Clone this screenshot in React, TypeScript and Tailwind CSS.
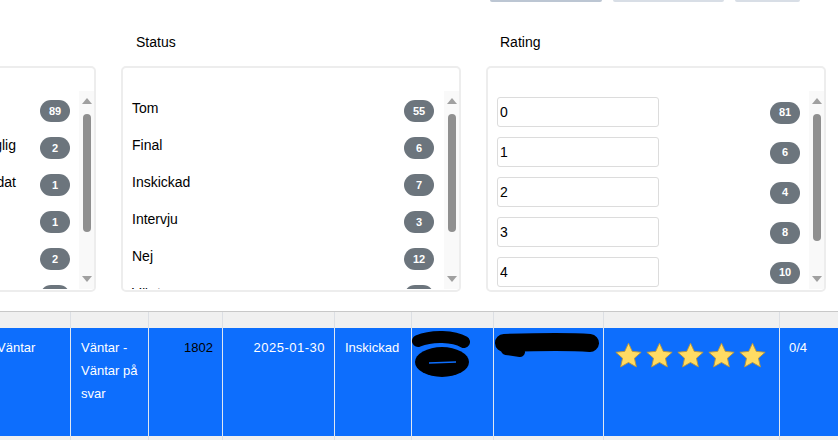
import React from 'react';

const statusRows = [
  { label: 'Tom', count: 55 },
  { label: 'Final', count: 6 },
  { label: 'Inskickad', count: 7 },
  { label: 'Intervju', count: 3 },
  { label: 'Nej', count: 12 },
  { label: 'Väntar', count: 2 },
];

const leftRows = [
  { label: '', count: 89 },
  { label: 'Ej tillgänglig', count: 2 },
  { label: 'Kandidat', count: 1 },
  { label: '', count: 1 },
  { label: '', count: 2 },
  { label: '', count: 4 },
];

const ratingRows = [
  { value: '0', count: 81 },
  { value: '1', count: 6 },
  { value: '2', count: 4 },
  { value: '3', count: 8 },
  { value: '4', count: 10 },
];

const cols = 'grid grid-cols-[83px_78px_74px_112px_77px_82px_110px_176px_80px]';

function Badge({ n }: { n: number }) {
  return (
    <span className="mt-[3px] flex h-[22px] w-[30px] shrink-0 items-center justify-center rounded-full bg-[#6c757d] text-[11px] font-bold text-white">
      {n}
    </span>
  );
}

function Scrollbar({ thumb }: { thumb: string }) {
  return (
    <div className="flex w-[15px] shrink-0 flex-col items-center bg-[#f9f9f9]">
      <div className="flex h-[20px] items-center justify-center">
        <div className="h-0 w-0 border-x-[5px] border-b-[6px] border-x-transparent border-b-[#a0a0a0]" />
      </div>
      <div className={`mt-[3px] w-[8px] rounded-full bg-[#8f8f8f] ${thumb}`} />
      <div className="flex-1" />
      <div className="flex h-[20px] items-center justify-center">
        <div className="h-0 w-0 border-x-[5px] border-t-[6px] border-x-transparent border-t-[#a0a0a0]" />
      </div>
    </div>
  );
}

function Panel({ children }: { children: React.ReactNode }) {
  return (
    <div className="h-[226px] w-[340px] rounded-[5px] border-2 border-[#ededed] pt-[23px]">
      <div className="flex h-[198px] overflow-hidden">{children}</div>
    </div>
  );
}

function Star() {
  return (
    <svg viewBox="0 0 24 24" className="h-[31px] w-[31px]">
      <path
        d="M12 2.5l2.9 6.3 6.9.7-5.2 4.6 1.5 6.8L12 17.4l-6.1 3.5 1.5-6.8L2.2 9.5l6.9-.7z"
        fill="#ffdb63"
        stroke="#b8963c"
        strokeWidth="0.7"
        strokeLinejoin="round"
      />
    </svg>
  );
}

export default function App() {
  return (
    <div className="relative h-[440px] w-[838px] overflow-hidden bg-white font-['Liberation_Sans',Arial,sans-serif] text-[14px] text-black">
      {/* bottoms of the buttons above */}
      <div className="flex h-[2px]">
        <div className="ml-[490px] w-[112px] rounded-b bg-[#bcc6d3]" />
        <div className="ml-[11px] w-[111px] rounded-b bg-[#d8dee6]" />
        <div className="ml-[11px] w-[65px] rounded-b bg-[#d8dee6]" />
      </div>

      <div className="mt-[30px] ml-[-244px] flex gap-[25px]">
        <div className="flex flex-col">
          <div className="mb-[14px] h-[20px]" />
          <Panel>
            <div className="flex-1 pl-[9px] pr-[9px]">
              {leftRows.map((r, i) => (
                <div key={i} className="flex h-[37px] items-center">
                  <span className="mb-[3px] mr-[24px] flex-1 text-right">{r.label}</span>
                  <Badge n={r.count} />
                </div>
              ))}
            </div>
            <Scrollbar thumb="h-[118px]" />
          </Panel>
        </div>

        <div className="flex flex-col">
          <div className="mb-[14px] h-[20px] pl-[15px] leading-[20px]">Status</div>
          <Panel>
            <div className="flex-1 pl-[9px] pr-[10px]">
              {statusRows.map((r) => (
                <div key={r.label} className="flex h-[37px] items-center justify-between">
                  <span className="mb-[3px]">{r.label}</span>
                  <Badge n={r.count} />
                </div>
              ))}
            </div>
            <Scrollbar thumb="h-[118px]" />
          </Panel>
        </div>

        <div className="flex flex-col">
          <div className="mb-[14px] h-[20px] pl-[14px] leading-[20px]">Rating</div>
          <Panel>
            <div className="flex-1 pl-[9px] pr-[9px]">
              {ratingRows.map((r) => (
                <div key={r.value} className="flex h-[40px] items-center justify-between">
                  <input
                    readOnly
                    value={r.value}
                    className="mt-[1px] h-[30px] w-[162px] rounded-[3px] border border-[#dcdcdc] bg-white px-[2px] text-[14px] text-black outline-none"
                  />
                  <Badge n={r.count} />
                </div>
              ))}
            </div>
            <Scrollbar thumb="h-[127px]" />
          </Panel>
        </div>
      </div>

      {/* table */}
      <div className="mt-[19px] ml-[-13px] text-[13px]">
        <div className={`${cols} h-[17px] border-t border-[#c8c8c8] bg-[#f0f0f0]`}>
          {Array.from({ length: 9 }).map((_, i) => (
            <div key={i} className={i === 0 ? '' : 'border-l border-[#dcdfe4]'} />
          ))}
        </div>
        <div className={`${cols} h-[108px] bg-[#0d6efd] leading-[23px] text-white`}>
          <div className="px-[10px] pt-[8px]">Väntar</div>
          <div className="border-l border-[#dfe7f2] pl-[10px] pr-[8px] pt-[8px]">Väntar - Väntar på svar</div>
          <div className="border-l border-[#dfe7f2] px-[9px] pt-[8px] text-right text-black">1802</div>
          <div className="border-l border-[#dfe7f2] px-[9px] pt-[8px] text-right tracking-[0.5px]">2025-01-30</div>
          <div className="border-l border-[#dfe7f2] px-[10px] pt-[8px]">Inskickad</div>
          <div className="relative border-l border-[#dfe7f2]">
            <svg className="absolute left-0 top-0 h-[60px] w-[70px]" viewBox="0 0 70 60">
              <path d="M6 13 C 20 7, 42 8, 52 14" stroke="#000" strokeWidth="12" strokeLinecap="round" fill="none" />
              <ellipse cx="30" cy="34" rx="27" ry="15" fill="#000" />
              <path d="M17 35 L 44 34" stroke="#0d6efd" strokeWidth="1.6" />
            </svg>
          </div>
          <div className="relative border-l border-[#dfe7f2]">
            <svg className="absolute left-0 top-0 h-[40px] w-[110px]" viewBox="0 0 110 40">
              <path d="M10 15 C 40 14, 70 13, 96 15" stroke="#000" strokeWidth="18" strokeLinecap="round" fill="none" />
              <path d="M12 22 L 26 24" stroke="#000" strokeWidth="10" strokeLinecap="round" />
            </svg>
          </div>
          <div className="flex border-l border-[#dfe7f2] pl-[9px] pt-[12px]">
            {Array.from({ length: 5 }).map((_, i) => (
              <Star key={i} />
            ))}
          </div>
          <div className="border-l border-[#dfe7f2] px-[9px] pt-[8px]">0/4</div>
        </div>
        <div className={`${cols} h-[4px] bg-[#f0f0f0]`}>
          {Array.from({ length: 9 }).map((_, i) => (
            <div key={i} className={i === 0 ? '' : 'border-l border-[#dcdfe4]'} />
          ))}
        </div>
      </div>
    </div>
  );
}
